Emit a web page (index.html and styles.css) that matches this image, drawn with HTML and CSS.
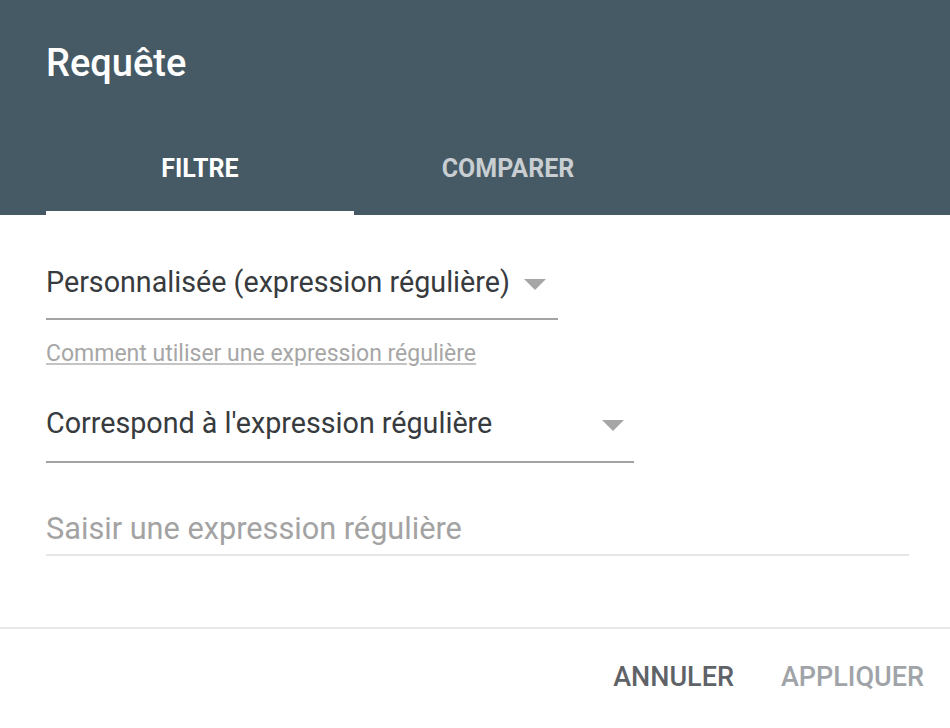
FILE: index.html
```html
<!DOCTYPE html>
<html lang="fr">
<head>
<meta charset="utf-8">
<title>Requête</title>
<link rel="stylesheet" href="styles.css">
</head>
<body>
<div class="dialog">
  <header class="head">
    <h1 class="title">Requête</h1>
    <nav class="tabs">
      <div class="tab tab-active">FILTRE</div>
      <div class="tab">COMPARER</div>
    </nav>
  </header>
  <main class="content">
    <div class="select select-type">
      <span class="select-text">Personnalisée (expression régulière)</span>
      <svg class="arrow" viewBox="0 0 22 11" width="22" height="11"><path d="M0 0 L22 0 L11 11 Z"/></svg>
    </div>
    <a class="help" href="#">Comment utiliser une expression régulière</a>
    <div class="select select-match">
      <span class="select-text">Correspond à l'expression régulière</span>
      <svg class="arrow" viewBox="0 0 22 11" width="22" height="11"><path d="M0 0 L22 0 L11 11 Z"/></svg>
    </div>
    <div class="input">Saisir une expression régulière</div>
  </main>
  <footer class="actions">
    <button class="btn btn-cancel">ANNULER</button>
    <button class="btn btn-apply">APPLIQUER</button>
  </footer>
</div>
</body>
</html>
```

FILE: styles.css
```css
html, body {
  margin: 0;
  padding: 0;
  background: #ffffff;
}
body {
  font-family: Roboto, "Noto Sans", "Liberation Sans", sans-serif;
  width: 950px;
  height: 728px;
  overflow: hidden;
}
.dialog {
  display: flex;
  flex-direction: column;
  height: 728px;
}
.head {
  background: #455a64;
  padding-left: 46px;
}
.title {
  margin: 0;
  padding: 41px 0 36px;
  font-size: 38px;
  line-height: 44px;
  font-weight: 500;
  color: #ffffff;
}
.tabs {
  display: flex;
  height: 94px;
}
.tab {
  width: 308px;
  display: flex;
  align-items: center;
  justify-content: center;
  font-size: 25px;
  font-weight: 700;
  color: #c8ced1;
}
.tab-active {
  color: #ffffff;
  box-shadow: inset 0 -4px 0 #ffffff;
}
.content {
  padding: 0 41px 0 46px;
  display: flex;
  flex-direction: column;
  align-items: flex-start;
}
.select {
  display: flex;
  align-items: center;
  box-sizing: border-box;
  border-bottom: 2px solid #a3a3a3;
  color: #383b3e;
  font-size: 28.7px;
  line-height: 40px;
}
.select-type {
  width: 512px;
  gap: 14px;
  margin-top: 47px;
  padding-bottom: 16px;
}
.select-match {
  width: 588px;
  justify-content: space-between;
  padding-right: 10px;
  margin-top: 34px;
  padding-bottom: 18px;
}
.arrow {
  fill: #a6a6a6;
  flex: none;
  margin-top: 4px;
}
.help {
  margin-top: 19px;
  font-size: 23px;
  line-height: 30px;
  color: #a6a6a6;
  text-decoration: underline;
  text-decoration-color: #c4c4c4;
}
.input {
  align-self: stretch;
  margin-top: 46px;
  padding-bottom: 5px;
  font-size: 30.7px;
  line-height: 40px;
  color: #a3a3a3;
  border-bottom: 2px solid #e6e6e6;
}
.actions {
  margin-top: 71px;
  border-top: 2px solid #e8e8e8;
  display: flex;
  justify-content: flex-end;
  align-items: flex-start;
  gap: 23px;
  padding: 30px 14px 0 0;
  flex: 1;
}
.btn {
  background: none;
  border: none;
  padding: 0 12px;
  font-family: inherit;
  font-size: 27px;
  line-height: 36px;
  font-weight: 500;
}
.btn-cancel {
  color: #5f6368;
}
.btn-apply {
  color: #a0a4a8;
}
```
